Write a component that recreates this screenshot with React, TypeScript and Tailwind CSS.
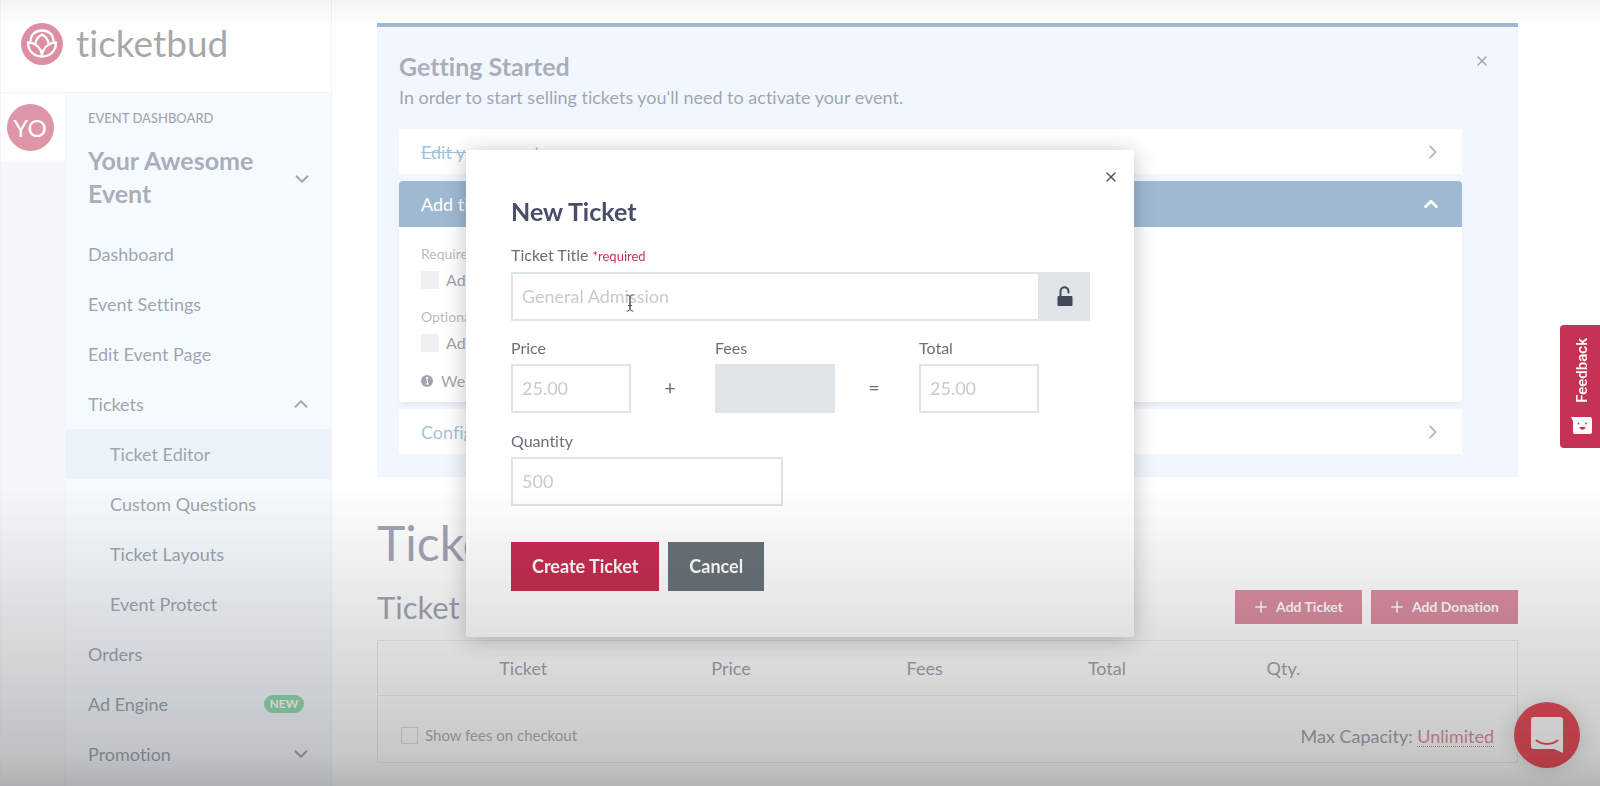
import React, { useState } from 'react';
import { ChevronDown, ChevronRight, ChevronUp, Plus, X } from 'lucide-react';

interface NavItem {
  label: string;
  sub?: boolean;
  active?: boolean;
  badge?: string;
  chevron?: 'up' | 'down';
}

const NAV_ITEMS: NavItem[] = [
  { label: 'Dashboard' },
  { label: 'Event Settings' },
  { label: 'Edit Event Page' },
  { label: 'Tickets', chevron: 'up' },
  { label: 'Ticket Editor', sub: true, active: true },
  { label: 'Custom Questions', sub: true },
  { label: 'Ticket Layouts', sub: true },
  { label: 'Event Protect', sub: true },
  { label: 'Orders' },
  { label: 'Ad Engine', badge: 'NEW' },
  { label: 'Promotion', chevron: 'down' },
];

const Logo: React.FC = () => (
  <svg className="w-[42px] h-[42px]" viewBox="0 0 42 42" fill="none">
    <circle cx="21" cy="21" r="21" fill="#b91f47" />
    <g stroke="#fff" strokeWidth="2.3" strokeLinejoin="round">
      <path d="M9.500 18.500C9.500 11.500 14.500 7.500 21 7.500s11.500 4 11.500 11" />
      <path d="M14.500 21c0-4 3-7.500 6.500-9.500 3.500 2 6.500 5.500 6.500 9.500" />
      <path d="M7 19.500c0 8 5.500 14 14 14s14-6 14-14c-7 0-13 5-14 13-1-8-7-13-14-13z" />
    </g>
  </svg>
);

const Sidebar: React.FC = () => (
  <aside className="w-[332px] shrink-0 border-x border-[#e3e8ee] flex flex-col">
    <a href="#home" className="h-[93px] shrink-0 border-b border-[#e3e8ee] flex items-center gap-[13px] pl-5 pb-1">
      <Logo />
      <span className="pb-0.5 text-[37px] leading-10 text-[#505050]">ticketbud</span>
    </a>
    <div className="flex flex-1">
      <div className="w-[65px] shrink-0 bg-[#efeff3] border-r border-[#e3e8ee]">
        <div className="h-[70px] bg-white border-b border-[#e3e8ee] flex items-center justify-center pr-1.5">
          <div className="w-[47px] h-[47px] rounded-full bg-[#bd2a4f] text-white text-2xl flex items-center justify-center">YO</div>
        </div>
      </div>
      <div className="flex-1 bg-[#ebf5ff]">
        <div className="px-[22px] pt-[15px]">
          <div className="text-[13px] leading-5 font-medium text-[#414a5b]">EVENT DASHBOARD</div>
          <div className="flex items-center justify-between mt-4">
            <h2 className="w-[180px] text-[25px] leading-[33px] font-bold text-[#545a75]">Your Awesome Event</h2>
            <ChevronDown className="w-[22px] h-[22px] mt-1 -mr-1 text-[#414a5b]" />
          </div>
        </div>
        <nav className="mt-[19px]">
          {NAV_ITEMS.map(item => (
            <a
              key={item.label}
              href="#nav"
              className={`h-[50px] pr-[19px] flex items-center justify-between text-lg text-[#414a5b] ${item.sub ? 'pl-11' : 'pl-[22px]'} ${
                item.active ? 'bg-[#d9e7f7]' : ''
              }`}
            >
              {item.label}
              {item.badge && (
                <span className="mr-2 w-10 h-[18px] rounded-full bg-[#2db967] text-white text-xs font-bold flex items-center justify-center">
                  {item.badge}
                </span>
              )}
              {item.chevron === 'up' && <ChevronUp className="w-[22px] h-[22px]" />}
              {item.chevron === 'down' && <ChevronDown className="w-[22px] h-[22px]" />}
            </a>
          ))}
        </nav>
      </div>
    </div>
  </aside>
);

const GettingStarted: React.FC = () => (
  <section className="mt-[23px] border-t-4 border-[#4173a7] bg-[#e5efff] pl-[22px] pr-14 pb-[23px]">
    <div className="flex items-start justify-between pt-[23px]">
      <div>
        <h2 className="text-[25px] leading-8 font-bold text-[#545a75]">Getting Started</h2>
        <p className="text-lg leading-[30px] text-[#414a5b]">In order to start selling tickets you'll need to activate your event.</p>
      </div>
      <button aria-label="Dismiss" className="mt-[3px] -mr-7 text-[#414a5b]">
        <X className="w-4 h-4" />
      </button>
    </div>

    <div className="mt-[17px] flex flex-col gap-[7px] text-lg">
      <a href="#edit" className="h-[45px] px-[22px] bg-white flex items-center justify-between text-[#4785bb]">
        <span className="line-through">Edit your event</span>
        <ChevronRight className="w-[22px] h-[22px] -mr-1 text-[#777]" />
      </a>

      <div className="rounded-sm bg-white shadow-md">
        <button className="w-full h-[46px] px-[22px] rounded-t-sm bg-[#4173a7] text-white flex items-center justify-between">
          Add tickets
          <ChevronUp className="w-[22px] h-[22px] -mr-0.5" strokeWidth={3} />
        </button>
        <div className="px-[22px] pt-[18px] pb-[9px] text-base text-[#414a5b]">
          <div className="text-sm leading-[18px] text-[#777]">Required</div>
          <label className="mt-2 h-[18px] flex items-center gap-[7px]">
            <input type="checkbox" className="appearance-none w-[18px] h-[18px] bg-[#dde1e4]" />
            Add one
          </label>
          <div className="mt-[19px] text-sm leading-[18px] text-[#777]">Optional</div>
          <label className="mt-2 h-[18px] flex items-center gap-[7px]">
            <input type="checkbox" className="appearance-none w-[18px] h-[18px] bg-[#dde1e4]" />
            Add info
          </label>
          <p className="mt-[17px] h-6 flex items-center gap-2">
            <svg className="w-3 h-3" viewBox="0 0 12 12">
              <circle cx="6" cy="6" r="6" fill="#414a5b" />
              <path d="M5 5h1.500v4M4.500 9h3.500M5.500 2.500h1.500v1h-1.500z" fill="none" stroke="#fff" />
            </svg>
            We help
          </p>
        </div>
      </div>

      <a href="#configure" className="h-[45px] px-[22px] bg-white flex items-center justify-between text-[#4785bb]">
        Configure
        <ChevronRight className="w-[22px] h-[22px] -mr-1 text-[#777]" />
      </a>
    </div>
  </section>
);

const TicketTable: React.FC = () => (
  <section className="text-[#414a5b]">
    <h1 className="mt-[38px] text-5xl leading-[56px] text-[#454a68]">Tickets</h1>
    <div className="mt-[19px] flex items-center justify-between">
      <h2 className="text-[31px] leading-[34px] text-[#454a68]">Ticket Types</h2>
      <div className="flex gap-[9px]">
        <button className="h-[34px] px-[19px] bg-[#b91f47] text-white text-sm font-bold flex items-center gap-1.5">
          <Plus className="w-[18px] h-[18px] -ml-0.5" />
          Add Ticket
        </button>
        <button className="h-[34px] px-[19px] bg-[#b91f47] text-white text-sm font-bold flex items-center gap-1.5">
          <Plus className="w-[18px] h-[18px] -ml-0.5" />
          Add Donation
        </button>
      </div>
    </div>
    <div className="mt-4 border border-[#d5dcdc]">
      <table className="w-full table-fixed text-lg">
        <thead>
          <tr className="h-[54px] border-b border-[#d5dcdc]">
            <th className="w-[22%] pl-10 font-normal">Ticket</th>
            <th className="w-[18%] font-normal">Price</th>
            <th className="w-[16%] font-normal">Fees</th>
            <th className="w-[16%] font-normal">Total</th>
            <th className="w-[15%] font-normal">Qty.</th>
            <th className="w-[13%]" />
          </tr>
        </thead>
      </table>
      <div className="h-[66px] pt-3.5 px-[23px] flex items-center justify-between">
        <label className="flex items-center gap-[7px] text-[15px] text-[#5a626c]">
          <input type="checkbox" className="appearance-none w-[17px] h-[17px] border border-[#b9c2c4]" />
          Show fees on checkout
        </label>
        <p className="text-lg leading-6">
          Max Capacity:{' '}
          <a href="#capacity" className="inline-block leading-5 border-b border-dotted border-[#b91f47] text-[#b91f47]">
            Unlimited
          </a>
        </p>
      </div>
    </div>
  </section>
);

interface FieldProps {
  id: string;
  label: string;
  placeholder?: string;
  disabled?: boolean;
  width: string;
}

const Field: React.FC<FieldProps> = ({ id, label, placeholder, disabled, width }) => (
  <div className={width}>
    <label htmlFor={id} className="block mb-1 text-base leading-6">
      {label}
    </label>
    <input
      id={id}
      placeholder={placeholder}
      disabled={disabled}
      className="block w-full h-[49px] px-[9px] border-2 border-[#dee4e8] text-lg placeholder:text-[#c8cacd] disabled:bg-[#dee4e8]"
    />
  </div>
);

const NewTicketDialog: React.FC<{ onClose: () => void }> = ({ onClose }) => (
  <div className="fixed inset-0 flex items-center justify-center bg-white/50">
    <div role="dialog" aria-label="New Ticket" className="relative w-[668px] bg-white pt-[45px] pb-[46px] pl-[45px] pr-11 text-[#6b7078] shadow-[0_3px_22px_rgba(0,0,0,0.24)]">
      <button onClick={onClose} aria-label="Close" className="absolute top-[19px] right-[15px] text-[#555]">
        <X className="w-4 h-4" />
      </button>
      <h2 className="text-[25px] leading-8 font-bold text-[#4a4d68]">New Ticket</h2>

      <label htmlFor="title" className="mt-4 mb-1 flex items-baseline gap-1 text-base leading-6">
        Ticket Title <span className="text-[13px] text-[#c43656]">*required</span>
      </label>
      <div className="relative flex">
        <input
          id="title"
          placeholder="General Admission"
          className="flex-1 h-[49px] px-[9px] border-2 border-[#dee4e8] text-lg placeholder:text-[#c8cacd]"
        />
        <button aria-label="Unlock" className="w-[50px] bg-[#dee4e8] flex items-center justify-center">
          <svg className="w-4 h-5" viewBox="0 0 16 20">
            <path d="M3.500 11V5.500a4 4 0 0 1 8-.5v1.500" fill="none" stroke="#414a54" strokeWidth="2" strokeLinecap="round" />
            <rect x="0.500" y="10" width="15" height="10" rx="1" fill="#414a54" />
          </svg>
        </button>
        {/* Text cursor */}
        <svg className="absolute left-[114px] top-[22px] w-2.5 h-[18px] pointer-events-none" viewBox="0 0 10 18" fill="none" stroke="#555">
          <path d="M1.500 1c2 0 3.500.5 3.500 2v12c0 1.500-1.500 2-3.500 2M8.500 1C6.500 1 5 1.500 5 3v12c0 1.500 1.500 2 3.500 2M3 11.500h4" />
        </svg>
      </div>

      <div className="mt-[15px] flex">
        <Field id="price" label="Price" placeholder="25.00" width="w-[120px]" />
        <div className="w-[84px] mt-[26px] pr-1.5 flex items-center justify-center text-xl">+</div>
        <Field id="fees" label="Fees" disabled width="w-[120px]" />
        <div className="w-[84px] mt-[26px] pr-1.5 flex items-center justify-center text-xl">=</div>
        <Field id="total" label="Total" placeholder="25.00" width="w-[120px]" />
      </div>

      <div className="mt-4">
        <Field id="quantity" label="Quantity" placeholder="500" width="w-[272px]" />
      </div>

      <div className="mt-9 flex gap-[9px] text-lg font-bold text-white">
        <button className="h-[49px] px-[21px] bg-[#c72e50]">Create Ticket</button>
        <button onClick={onClose} className="h-[49px] px-[21px] bg-[#697379]">
          Cancel
        </button>
      </div>
    </div>
  </div>
);

const FeedbackTab: React.FC = () => (
  <button className="fixed right-0 top-[325px] w-10 h-[123px] rounded-l-sm bg-[#c43354] text-white flex flex-col items-center justify-between pt-[13px] pb-[13px] pl-1">
    <span className="[writing-mode:vertical-rl] rotate-180 text-[15px] leading-5 font-medium font-[Roboto,sans-serif]">Feedback</span>
    <svg className="w-[22px] h-[18px]" viewBox="0 0 22 18">
      <path d="M0 0h19a2 2 0 0 1 2 2v13a2 2 0 0 1-2 2H4a2 2 0 0 1-2-2V4z" fill="#fff" />
      <path d="M8.500 10h6c-.5 3.500-5.500 3.500-6 0z" fill="#c43354" />
      <circle cx="7.500" cy="6.500" r="0.900" fill="#c43354" />
      <circle cx="15" cy="6.500" r="0.900" fill="#c43354" />
    </svg>
  </button>
);

const ChatLauncher: React.FC = () => (
  <button aria-label="Open chat" className="fixed right-5 bottom-[18px] w-[66px] h-[66px] rounded-full bg-[#e8505b] shadow-[0_2px_20px_rgba(0,0,0,0.15)] flex items-center justify-center">
    <svg className="w-8 h-9" viewBox="0 0 32 36">
      <path d="M3 0h26a3 3 0 0 1 3 3v33l-9-4H3a3 3 0 0 1-3-3V3a3 3 0 0 1 3-3z" fill="#fff" />
      <path d="M5.500 23.500c6 4.500 15 4.500 21 0" fill="none" stroke="#e8505b" strokeWidth="2" strokeLinecap="round" />
    </svg>
  </button>
);

export default function App() {
  const [isOpen, setIsOpen] = useState(true);

  return (
    <div className="h-screen overflow-hidden flex bg-white font-[Lato,sans-serif] [font-variant-ligatures:none]">
      <Sidebar />
      <main className="flex-1 pl-[45px] pr-[82px]">
        <GettingStarted />
        <TicketTable />
      </main>

      {isOpen && <NewTicketDialog onClose={() => setIsOpen(false)} />}
      <FeedbackTab />
      <ChatLauncher />

      {/* Top and bottom shade */}
      <div className="fixed inset-x-0 top-0 h-7 bg-linear-to-b from-black/4 to-transparent pointer-events-none" />
      <div className="fixed inset-x-0 bottom-0 h-[300px] bg-[linear-gradient(to_top,rgba(0,0,0,0.29),rgba(0,0,0,0.22)_10%,rgba(0,0,0,0.145)_40%,rgba(0,0,0,0.06)_75%,transparent)] pointer-events-none" />
    </div>
  );
}
